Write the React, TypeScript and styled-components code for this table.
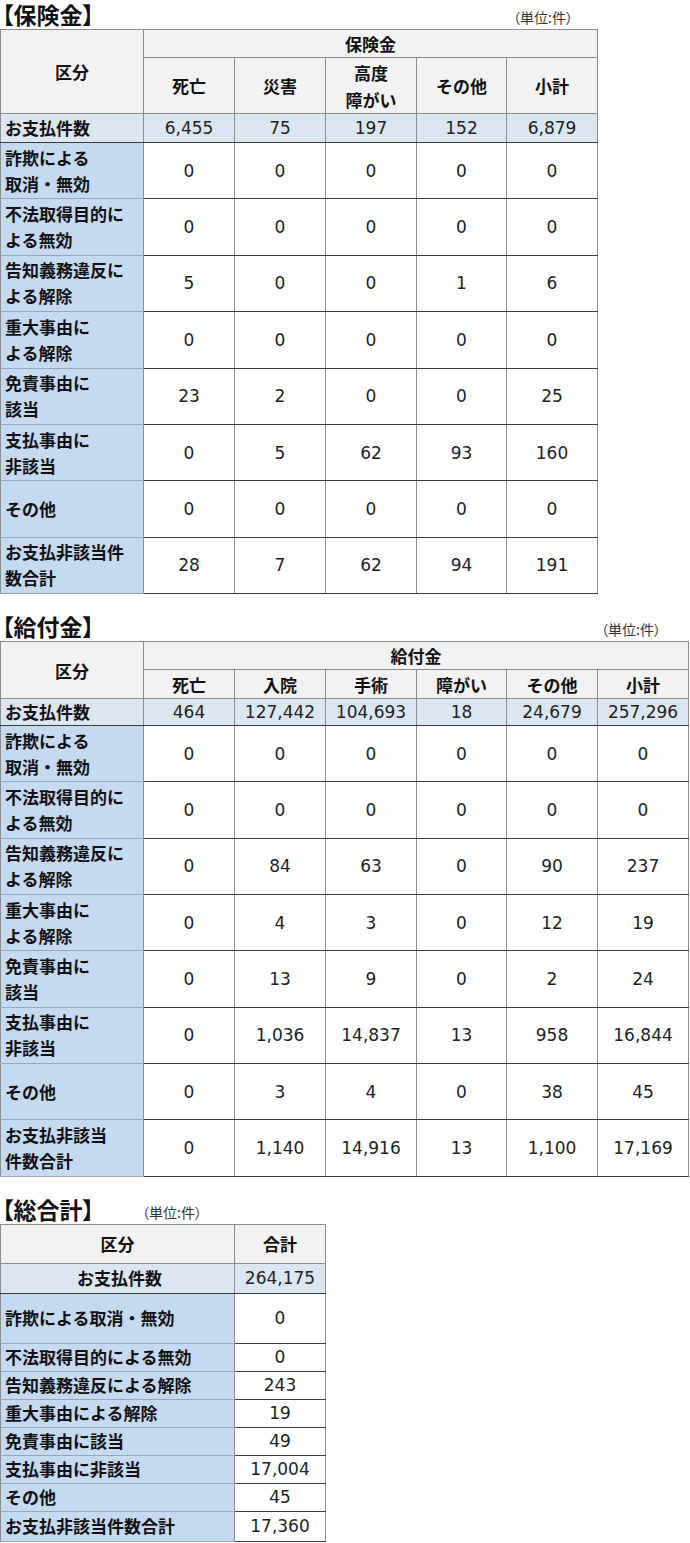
import React from "react";
import styled, { createGlobalStyle } from "styled-components";

const GlobalStyle = createGlobalStyle`
  html, body {
    margin: 0;
    padding: 0;
    background: #ffffff;
  }
  body {
    font-family: "Noto Sans CJK JP", "Noto Sans", sans-serif;
    color: #111111;
  }
`;

const Page = styled.div`
  display: flex;
  flex-direction: column;
  gap: 18px;
  width: 690px;
`;

const Section = styled.section`
  display: flex;
  flex-direction: column;
`;

const TitleRow = styled.div<{ $width: number; $inline?: boolean; $padRight?: number }>`
  display: flex;
  align-items: flex-end;
  justify-content: ${(p) => (p.$inline ? "flex-start" : "space-between")};
  gap: ${(p) => (p.$inline ? "48px" : "0")};
  width: ${(p) => p.$width}px;
  height: 29px;
  padding-right: ${(p) => p.$padRight ?? 0}px;
  box-sizing: border-box;
`;

const Title = styled.h2`
  margin: 0 0 0 2px;
  font-size: 23px;
  line-height: 29px;
  font-weight: 700;
  font-feature-settings: "palt";
  color: #111;
`;

const Unit = styled.span`
  font-size: 14px;
  line-height: 18px;
  margin-bottom: 3px;
  color: #333;
  font-feature-settings: "palt";
`;

const Table = styled.table<{ $width: number }>`
  border-collapse: collapse;
  table-layout: fixed;
  width: ${(p) => p.$width}px;
`;

const Row = styled.tr<{ $h: number }>`
  height: ${(p) => p.$h}px;
`;

const HeadCell = styled.th`
  background: #f2f2f2;
  border: 1px solid #8c8c8c;
  padding: 0;
  font-size: 17px;
  line-height: 27px;
  font-weight: 700;
  text-align: center;
  vertical-align: middle;
  color: #111;
`;

const LabelCell = styled.td<{ $pay?: boolean; $center?: boolean }>`
  background: ${(p) => (p.$pay ? "#dce6f1" : "#c5d9f1")};
  border: 1px solid #8c8c8c;
  border-bottom-color: ${(p) => (p.$pay ? "#3a3a3a" : "#9aa6b4")};
  padding: 0 0 0 4px;
  font-size: 17px;
  line-height: 26px;
  font-weight: 700;
  text-align: ${(p) => (p.$center ? "center" : "left")};
  vertical-align: middle;
  white-space: nowrap;
  color: #111;
`;

const NumCell = styled.td<{ $pay?: boolean }>`
  background: ${(p) => (p.$pay ? "#dce6f1" : "#ffffff")};
  border: 1px solid #8c8c8c;
  border-bottom-color: #3a3a3a;
  padding: 0;
  font-family: "DejaVu Sans", Verdana, sans-serif;
  font-size: 17px;
  line-height: 22px;
  text-align: center;
  vertical-align: middle;
  color: #222;
`;

type DataRow = { label: string[]; values: string[] };

const lines = (parts: string[]) =>
  parts.map((t, i) => (
    <React.Fragment key={i}>
      {i > 0 && <br />}
      {t}
    </React.Fragment>
  ));

const hokenCols = [["死亡"], ["災害"], ["高度", "障がい"], ["その他"], ["小計"]];
const hokenPay = ["6,455", "75", "197", "152", "6,879"];
const hokenRows: DataRow[] = [
  { label: ["詐欺による", "取消・無効"], values: ["0", "0", "0", "0", "0"] },
  { label: ["不法取得目的に", "よる無効"], values: ["0", "0", "0", "0", "0"] },
  { label: ["告知義務違反に", "よる解除"], values: ["5", "0", "0", "1", "6"] },
  { label: ["重大事由に", "よる解除"], values: ["0", "0", "0", "0", "0"] },
  { label: ["免責事由に", "該当"], values: ["23", "2", "0", "0", "25"] },
  { label: ["支払事由に", "非該当"], values: ["0", "5", "62", "93", "160"] },
  { label: ["その他"], values: ["0", "0", "0", "0", "0"] },
  { label: ["お支払非該当件", "数合計"], values: ["28", "7", "62", "94", "191"] },
];

const kyufuCols = [["死亡"], ["入院"], ["手術"], ["障がい"], ["その他"], ["小計"]];
const kyufuPay = ["464", "127,442", "104,693", "18", "24,679", "257,296"];
const kyufuRows: DataRow[] = [
  { label: ["詐欺による", "取消・無効"], values: ["0", "0", "0", "0", "0", "0"] },
  { label: ["不法取得目的に", "よる無効"], values: ["0", "0", "0", "0", "0", "0"] },
  { label: ["告知義務違反に", "よる解除"], values: ["0", "84", "63", "0", "90", "237"] },
  { label: ["重大事由に", "よる解除"], values: ["0", "4", "3", "0", "12", "19"] },
  { label: ["免責事由に", "該当"], values: ["0", "13", "9", "0", "2", "24"] },
  { label: ["支払事由に", "非該当"], values: ["0", "1,036", "14,837", "13", "958", "16,844"] },
  { label: ["その他"], values: ["0", "3", "4", "0", "38", "45"] },
  { label: ["お支払非該当", "件数合計"], values: ["0", "1,140", "14,916", "13", "1,100", "17,169"] },
];

const totalRows: { label: string; value: string; h: number }[] = [
  { label: "詐欺による取消・無効", value: "0", h: 50 },
  { label: "不法取得目的による無効", value: "0", h: 28 },
  { label: "告知義務違反による解除", value: "243", h: 28 },
  { label: "重大事由による解除", value: "19", h: 28 },
  { label: "免責事由に該当", value: "49", h: 28 },
  { label: "支払事由に非該当", value: "17,004", h: 28 },
  { label: "その他", value: "45", h: 28 },
  { label: "お支払非該当件数合計", value: "17,360", h: 30 },
];

type BreakdownProps = {
  title: string;
  group: string;
  cols: string[][];
  pay: string[];
  rows: DataRow[];
  widths: number[];
  heights: { top: number; sub: number; pay: number; row: number };
  padRight: number;
};

function Breakdown({ title, group, cols, pay, rows, widths, heights, padRight }: BreakdownProps) {
  const total = widths.reduce((a, b) => a + b, 0);
  return (
    <Section>
      <TitleRow $width={total} $padRight={padRight}>
        <Title>{title}</Title>
        <Unit>（単位:件）</Unit>
      </TitleRow>
      <Table $width={total}>
        <colgroup>
          {widths.map((w, i) => (
            <col key={i} style={{ width: w }} />
          ))}
        </colgroup>
        <thead>
          <Row $h={heights.top}>
            <HeadCell rowSpan={2}>区分</HeadCell>
            <HeadCell colSpan={cols.length}>{group}</HeadCell>
          </Row>
          <Row $h={heights.sub}>
            {cols.map((c, i) => (
              <HeadCell key={i}>{lines(c)}</HeadCell>
            ))}
          </Row>
        </thead>
        <tbody>
          <Row $h={heights.pay}>
            <LabelCell $pay>お支払件数</LabelCell>
            {pay.map((v, i) => (
              <NumCell key={i} $pay>
                {v}
              </NumCell>
            ))}
          </Row>
          {rows.map((r, i) => (
            <Row key={i} $h={heights.row}>
              <LabelCell>{lines(r.label)}</LabelCell>
              {r.values.map((v, j) => (
                <NumCell key={j}>{v}</NumCell>
              ))}
            </Row>
          ))}
        </tbody>
      </Table>
    </Section>
  );
}

export default function App() {
  return (
    <>
      <GlobalStyle />
      <Page>
        <Breakdown
          title="【保険金】"
          group="保険金"
          cols={hokenCols}
          pay={hokenPay}
          rows={hokenRows}
          widths={[143, 91, 91, 91, 90, 91]}
          heights={{ top: 28, sub: 56, pay: 29, row: 56.4 }}
          padRight={24}
        />
        <Breakdown
          title="【給付金】"
          group="給付金"
          cols={kyufuCols}
          pay={kyufuPay}
          rows={kyufuRows}
          widths={[143, 91, 91, 91, 90, 91, 91]}
          heights={{ top: 28, sub: 29, pay: 27, row: 56.3 }}
          padRight={27}
        />
        <Section>
          <TitleRow $width={325} $inline>
            <Title>【総合計】</Title>
            <Unit>（単位:件）</Unit>
          </TitleRow>
          <Table $width={325}>
            <colgroup>
              <col style={{ width: 234 }} />
              <col style={{ width: 91 }} />
            </colgroup>
            <thead>
              <Row $h={39}>
                <HeadCell>区分</HeadCell>
                <HeadCell>合計</HeadCell>
              </Row>
            </thead>
            <tbody>
              <Row $h={30}>
                <LabelCell $pay $center>
                  お支払件数
                </LabelCell>
                <NumCell $pay>264,175</NumCell>
              </Row>
              {totalRows.map((r, i) => (
                <Row key={i} $h={r.h}>
                  <LabelCell>{r.label}</LabelCell>
                  <NumCell>{r.value}</NumCell>
                </Row>
              ))}
            </tbody>
          </Table>
        </Section>
      </Page>
    </>
  );
}
